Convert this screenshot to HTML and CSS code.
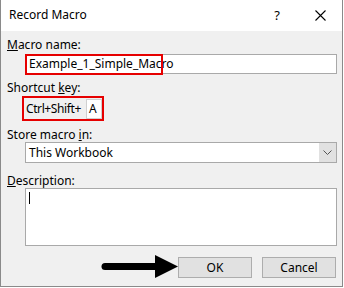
FILE: index.html
```html
<!DOCTYPE html>
<html lang="en">
<head>
    <meta charset="UTF-8">
    <title>Record Macro</title>
    <link rel="stylesheet" href="styles.css">
</head>
<body>

    <div class="dialog">
        <div class="titlebar">
            <span class="title">Record Macro</span>
            <span class="help">?</span>
            <svg class="close" width="11" height="11" viewBox="0 0 11 11">
                <path d="M0.5 0.5 L10.5 10.5 M10.5 0.5 L0.5 10.5" stroke="#000" stroke-width="1.1" fill="none"/>
            </svg>
        </div>

        <div class="content">
            <div class="label"><u>M</u>acro name:</div>
            <div class="field name-field">
                <span class="value">Example_1_Simple_Macro</span>
                <span class="mark"></span>
            </div>

            <div class="label gap">Shortcut <u>k</u>ey:</div>
            <div class="shortcut">
                <span class="keys">Ctrl+Shift+</span>
                <span class="key-box">A</span>
            </div>

            <div class="label gap">Store macro <u>i</u>n:</div>
            <div class="field select">
                <span class="value">This Workbook</span>
                <span class="drop">
                    <svg width="9" height="5" viewBox="0 0 9 5">
                        <polyline points="0.5,0.5 4.5,4.5 8.5,0.5" stroke="#555" stroke-width="1" fill="none"/>
                    </svg>
                </span>
            </div>

            <div class="label gap-lg"><u>D</u>escription:</div>
            <div class="field desc">
                <span class="caret"></span>
            </div>

            <div class="buttons">
                <button class="btn">OK</button>
                <button class="btn">Cancel</button>
            </div>
        </div>

        <!-- annotation arrow -->
        <svg class="arrow" width="84" height="28" viewBox="0 0 84 28">
            <line x1="9" y1="14.5" x2="62" y2="14.5" stroke="#000" stroke-width="7" stroke-linecap="round"/>
            <polygon points="59,3 82,14.5 59,26" fill="#000"/>
        </svg>
    </div>

</body>
</html>
```

FILE: styles.css
```css
* {
    margin: 0;
    padding: 0;
    box-sizing: border-box;
}
body {
    font-family: 'Noto Sans', 'Open Sans', sans-serif;
    font-size: 12px;
    color: #000;
    background-color: #fff;
}
.dialog {
    position: relative;
    width: 343px;
    height: 287px;
    background-color: #f0f0f0;
    border: 1px solid #8a8a8a;
    border-top: none;
}
.titlebar {
    display: flex;
    align-items: center;
    height: 31px;
    background-color: #fff;
    padding-left: 8px;
}
.title {
    flex: 1;
    line-height: 16px;
    margin-top: -1px;
}
.help {
    font-size: 13px;
    margin-right: 35px;
    margin-top: -1px;
}
.close {
    margin-right: 16px;
    margin-top: -1px;
}
.content {
    padding: 6px 5px 0 6px;
}
.label {
    line-height: 15px;
    height: 15px;
    white-space: nowrap;
}
.label.gap {
    margin-top: 6px;
}
.label.gap-lg {
    margin-top: 10px;
}
.field {
    position: relative;
    margin-left: 18px;
    width: 312px;
    background-color: #fff;
    border: 1px solid #a9a9a9;
}
.name-field {
    margin-top: 2px;
    height: 20px;
    line-height: 18px;
    padding-left: 3px;
}
.mark {
    position: absolute;
    left: -1px;
    top: -1px;
    width: 138px;
    height: 21px;
    border: 2px solid #e60000;
}
.shortcut {
    display: inline-flex;
    align-items: flex-start;
    margin-top: 1px;
    margin-left: 15px;
    width: 82px;
    height: 25px;
    border: 2px solid #e60000;
    padding: 1px 0 0 2px;
}
.keys {
    line-height: 20px;
    width: 60px;
    letter-spacing: -0.4px;
    white-space: nowrap;
}
.key-box {
    width: 16px;
    height: 20px;
    line-height: 18px;
    padding-left: 2px;
    background-color: #fff;
    border: 1px solid #d0d0d0;
}
.select {
    display: flex;
    height: 21px;
    line-height: 19px;
}
.select .value {
    flex: 1;
    padding-left: 3px;
}
.drop {
    display: flex;
    align-items: center;
    justify-content: center;
    width: 17px;
    background-color: #e1e1e1;
}
.desc {
    height: 58px;
    padding: 3px 0 0 3px;
}
.caret {
    display: block;
    width: 1px;
    height: 12px;
    background-color: #000;
}
.buttons {
    display: flex;
    justify-content: flex-end;
    gap: 10px;
    margin-top: 11px;
    padding-right: 1px;
}
.btn {
    width: 74px;
    height: 21px;
    font-family: inherit;
    font-size: 12px;
    color: #000;
    background-color: #e1e1e1;
    border: 1px solid #adadad;
}
.arrow {
    position: absolute;
    left: 95px;
    top: 252px;
}
```
